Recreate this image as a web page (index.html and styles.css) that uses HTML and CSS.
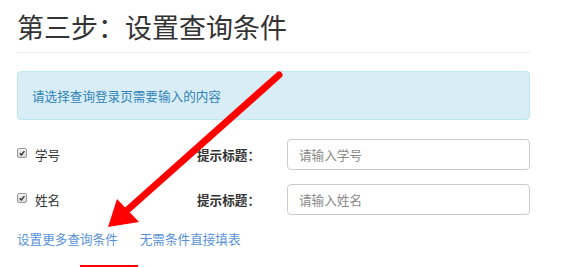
FILE: index.html
```html
<!DOCTYPE html>
<html lang="zh">
<head>
<meta charset="utf-8">
<link rel="stylesheet" href="styles.css">
</head>
<body>
<div class="page">
  <h1 class="title">第三步：设置查询条件</h1>
  <div class="alert">请选择查询登录页需要输入的内容</div>
  <div class="row">
    <label class="check"><span class="box"><svg viewBox="0 0 10 10" width="10" height="10"><path d="M2.2 5.2 L4.2 7.4 L8 2.6" fill="none" stroke="#333" stroke-width="1.8"/></svg></span>学号</label>
    <span class="hint">提示标题：</span>
    <input class="field" type="text" placeholder="请输入学号">
  </div>
  <div class="row">
    <label class="check"><span class="box"><svg viewBox="0 0 10 10" width="10" height="10"><path d="M2.2 5.2 L4.2 7.4 L8 2.6" fill="none" stroke="#333" stroke-width="1.8"/></svg></span>姓名</label>
    <span class="hint">提示标题：</span>
    <input class="field" type="text" placeholder="请输入姓名">
  </div>
  <div class="links">
    <a href="#" class="link">设置更多查询条件</a>
    <a href="#" class="link">无需条件直接填表</a>
  </div>
</div>
<svg class="annot" width="586" height="267" viewBox="0 0 586 267">
  <line x1="279" y1="75" x2="124" y2="213" stroke="#ff0000" stroke-width="7" stroke-linecap="round"/>
  <polygon points="108,227 117,199 139,222" fill="#ff0000"/>
  <rect x="80" y="265" width="58" height="3" fill="#ff0000"/>
</svg>
</body>
</html>
```
FILE: styles.css
```css
html, body {
  margin: 0;
  padding: 0;
  background: #fff;
}
body {
  font-family: "Noto Sans CJK SC", "Noto Sans", sans-serif;
  color: #333;
  width: 586px;
  height: 267px;
  overflow: hidden;
  position: relative;
}
.page {
  width: 513px;
  padding-left: 17px;
  padding-top: 12px;
}
.title {
  margin: 0;
  font-size: 27px;
  font-weight: 400;
  line-height: 30px;
  color: #333;
  padding-bottom: 10px;
  border-bottom: 1px solid #eee;
}
.alert {
  margin-top: 18px;
  height: 47px;
  box-sizing: content-box;
  background: #d9edf7;
  border: 1px solid #bce8f1;
  border-radius: 4px;
  color: #2f84b6;
  font-size: 12.6px;
  line-height: 47px;
  padding: 0 14px;
}
.row {
  display: flex;
  align-items: center;
  height: 31px;
  margin-top: 19px;
  font-size: 12.6px;
}
.row + .row {
  margin-top: 14px;
}
.check {
  display: flex;
  align-items: center;
  flex: 0 0 170px;
  color: #333;
}
.box {
  width: 10px;
  height: 10px;
  box-sizing: border-box;
  border: 1px solid #9a9a9a;
  border-radius: 2px;
  background: linear-gradient(#f4f4f4, #d8d8d8);
  margin-right: 8px;
  display: flex;
  align-items: center;
  justify-content: center;
  position: relative;
  top: -2px;
}
.box svg {
  display: block;
  width: 8px;
  height: 8px;
}
.hint {
  flex: 0 0 90px;
  padding-left: 10px;
  font-weight: 700;
  color: #333;
  white-space: nowrap;
}
.field {
  flex: 0 0 243px;
  width: 243px;
  height: 31px;
  box-sizing: border-box;
  border: 1px solid #ccc;
  border-radius: 4px;
  padding: 0 11px;
  font-family: "Noto Sans CJK SC", "Noto Sans", sans-serif;
  font-size: 12.6px;
  color: #555;
  margin: 0;
}
.field::placeholder {
  color: #888;
}
.links {
  display: flex;
  gap: 22px;
  margin-top: 14px;
  font-size: 12.6px;
  line-height: 20px;
}
.link {
  color: #5892d6;
  text-decoration: none;
}
.annot {
  position: absolute;
  left: 0;
  top: 0;
  pointer-events: none;
}
```
